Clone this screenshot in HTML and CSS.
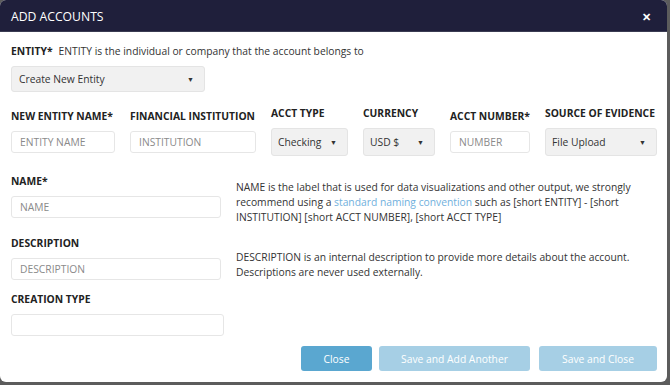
FILE: index.html
```html
<!DOCTYPE html>
<html lang="en">
<head>
    <meta charset="UTF-8">
    <meta name="viewport" content="width=device-width, initial-scale=1.0">
    <title>Add Accounts</title>
    <link rel="stylesheet" href="styles.css">
</head>
<body>
    <div class="modal">
        <div class="modal-header">
            <h1>ADD ACCOUNTS</h1>
            <span class="close-x">&#x2715;</span>
        </div>

        <div class="modal-body">
            <div class="entity-line">
                <label>ENTITY*</label>
                <span class="hint">ENTITY is the individual or company that the account belongs to</span>
            </div>
            <div class="select entity-select">
                <span>Create New Entity</span>
                <span class="caret">&#9660;</span>
            </div>

            <div class="field-row">
                <div class="field w-104">
                    <label>NEW ENTITY NAME*</label>
                    <input type="text" placeholder="ENTITY NAME">
                </div>
                <div class="field w-126">
                    <label>FINANCIAL INSTITUTION</label>
                    <input type="text" placeholder="INSTITUTION">
                </div>
                <div class="field w-77">
                    <label>ACCT TYPE</label>
                    <div class="select tall">
                        <span>Checking</span>
                        <span class="caret">&#9660;</span>
                    </div>
                </div>
                <div class="field w-72">
                    <label>CURRENCY</label>
                    <div class="select tall">
                        <span>USD $</span>
                        <span class="caret">&#9660;</span>
                    </div>
                </div>
                <div class="field w-80">
                    <label>ACCT NUMBER*</label>
                    <input type="text" placeholder="NUMBER">
                </div>
                <div class="field w-112">
                    <label>SOURCE OF EVIDENCE</label>
                    <div class="select tall">
                        <span>File Upload</span>
                        <span class="caret">&#9660;</span>
                    </div>
                </div>
            </div>

            <div class="info-row first">
                <div class="field w-210">
                    <label>NAME*</label>
                    <input type="text" placeholder="NAME">
                </div>
                <p class="info">NAME is the label that is used for data visualizations and other output, we strongly recommend using a <a href="#">standard naming convention</a> such as [short ENTITY] - [short INSTITUTION] [short ACCT NUMBER], [short ACCT TYPE]</p>
            </div>

            <div class="info-row">
                <div class="field w-210">
                    <label>DESCRIPTION</label>
                    <input type="text" placeholder="DESCRIPTION">
                </div>
                <p class="info">DESCRIPTION is an internal description to provide more details about the account. Descriptions are never used externally.</p>
            </div>

            <div class="field w-213 creation">
                <label>CREATION TYPE</label>
                <input type="text">
            </div>

            <div class="button-group">
                <button class="btn-close">Close</button>
                <button class="btn-disabled wide">Save and Add Another</button>
                <button class="btn-disabled">Save and Close</button>
            </div>
        </div>
    </div>
</body>
</html>
```

FILE: styles.css
```css
body {
    margin: 0;
    background-color: #5c5c5c;
    font-family: 'Open Sans', 'Noto Sans', sans-serif;
    color: #3a3a3a;
    font-size: 10.3px;
}

.modal {
    width: 667px;
    height: 382px;
    background-color: #ffffff;
    border-radius: 6px;
    overflow: hidden;
    display: flex;
    flex-direction: column;
}

.modal-header {
    height: 32px;
    background-color: #1f1f3b;
    padding: 2px 16px 0 11px;
    display: flex;
    align-items: center;
    justify-content: space-between;
    border-bottom: 1px solid #3a3b52;
    box-sizing: border-box;
}

h1 {
    margin: 0;
    color: #ffffff;
    font-size: 12.2px;
    font-weight: 400;
}

.close-x {
    color: #ffffff;
    font-size: 11px;
    font-weight: 700;
}

.modal-body {
    padding: 12px 10px 0 11px;
    flex-grow: 1;
    display: flex;
    flex-direction: column;
}

label {
    display: block;
    font-weight: 700;
    color: #222;
    line-height: 15px;
    white-space: nowrap;
}

.entity-line {
    display: flex;
    gap: 6px;
    line-height: 15px;
}

.hint {
    color: #333;
}

.select {
    display: flex;
    align-items: center;
    justify-content: space-between;
    background-color: #f1f1f1;
    border: 1px solid #e4e4e4;
    border-radius: 3px;
    box-sizing: border-box;
    padding: 0 10px 0 7px;
    color: #333;
}

.caret {
    font-size: 7px;
    color: #333;
}

.entity-select {
    width: 194px;
    height: 26px;
    margin-top: 7px;
}

.select.tall {
    height: 28px;
    padding-left: 6px;
}

input[type="text"] {
    height: 22px;
    border: 1px solid #e6e6e6;
    border-radius: 3px;
    box-sizing: border-box;
    padding: 0 8px;
    font-family: inherit;
    font-size: 10.3px;
    color: #333;
    width: 100%;
}

input::placeholder {
    color: #8a8a8a;
}

.field {
    display: flex;
    flex-direction: column;
    gap: 7px;
}

.w-104 { width: 104px; }
.w-126 { width: 126px; }
.w-77 { width: 77px; }
.w-72 { width: 72px; }
.w-80 { width: 80px; }
.w-112 { width: 112px; }
.w-210 { width: 210px; }
.w-213 { width: 213px; }

.field-row {
    display: flex;
    align-items: center;
    gap: 15px;
    margin-top: 14px;
}

.info-row {
    display: flex;
    align-items: center;
    gap: 15px;
    margin-top: 17px;
}

.info-row + .info-row {
    margin-top: 18px;
}

.info {
    margin: 7px 0 -7px 0;
    line-height: 15px;
    color: #333;
    flex: 1;
}

.info a {
    color: #6fb0dd;
    text-decoration: none;
}

.creation {
    margin-top: 12px;
}

.button-group {
    display: flex;
    justify-content: flex-end;
    gap: 7px;
    margin-top: 10px;
}

button {
    height: 25px;
    border: none;
    border-radius: 3px;
    color: #ffffff;
    font-family: inherit;
    font-size: 10.3px;
    padding: 0;
    width: 71px;
}

.btn-close {
    background-color: #5aa7d0;
}

.btn-disabled {
    background-color: #a6cfe5;
    width: 118px;
}

.btn-disabled.wide {
    width: 151px;
    margin-right: 2px;
}
```
